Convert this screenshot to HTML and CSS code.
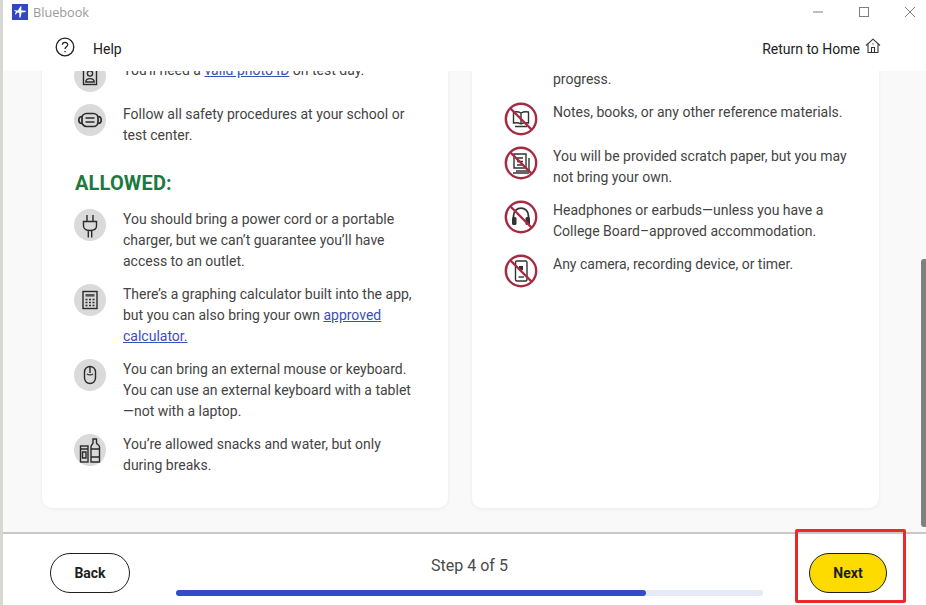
FILE: index.html
```html
<!DOCTYPE html>
<html lang="en">
  <head>
    <meta charset="UTF-8" />
    <meta name="viewport" content="width=device-width, initial-scale=1.0" />
    <title>Bluebook</title>
    <link rel="stylesheet" href="styles.css">
  </head>
  <body>
    <div class="window">
      <div class="title-bar">
        <svg class="app-logo" viewBox="0 0 16 16">
          <rect width="16" height="16" fill="#3147c4" />
          <path d="M9.5 2 L9.2 6.3 L13.5 6.8 L14 8 L9.6 8.6 L8.6 13.5 L7.4 13.5 L7.2 9 L5.4 8.6 L3.6 10.6 L2.8 10.2 L4 7.8 L2.2 6.6 L2.8 6 L5.6 6.8 L8.4 2.4 Z" fill="#fff" />
        </svg>
        <span class="app-name">Bluebook</span>
        <div class="window-controls">
          <svg viewBox="1 1 10 10"><path d="M1 6 H11" /></svg>
          <svg viewBox="1 1 10 10"><rect x="1.5" y="1.5" width="9" height="9" /></svg>
          <svg viewBox="1 1 10 10"><path d="M1 1 L11 11 M11 1 L1 11" /></svg>
        </div>
      </div>

      <div class="top-nav">
        <div class="help">
          <svg class="help-icon" viewBox="0 0 20 20">
            <circle cx="10" cy="10" r="8.8" />
            <path d="M7.4 7.8 C7.4 4.6 12.7 4.6 12.7 7.7 C12.7 9.8 10 9.6 10 12" />
            <path d="M10 14 V15.2" />
          </svg>
          <span>Help</span>
        </div>
        <div class="return-home">
          <span>Return to Home</span>
          <svg class="home-icon" viewBox="0 0 16 16">
            <path d="M1 7.5 L8 1.2 L15 7.5" />
            <path d="M3 6.2 V14.5 H13 V6.2" />
            <path d="M6.5 14.5 V9.5 H9.5 V14.5" />
            <path d="M8 5.2 V6.6" />
          </svg>
        </div>
      </div>

      <div class="content">
        <div class="cards">
          <div class="card">
            <h2 class="card-heading">REQUIRED:</h2>
            <div class="item">
              <span class="icon">
                <svg viewBox="0 0 20 20">
                  <rect x="3.5" y="1.5" width="13" height="17" />
                  <circle cx="10" cy="7.5" r="2.6" />
                  <path d="M5.8 16 C6 11.5 14 11.5 14.2 16 Z" />
                </svg>
              </span>
              <p>You'll need a <a href="#">valid photo ID</a> on test day.</p>
            </div>
            <div class="item">
              <span class="icon">
                <svg class="icon-mask" viewBox="0 0 26 20">
                  <rect x="5" y="3.5" width="16" height="13" rx="4.5" />
                  <path d="M5 6.5 C0.8 6.5 0.8 13.5 5 13.5 M21 6.5 C25.2 6.5 25.2 13.5 21 13.5 M8.5 8 H17.5 M8.5 12 H17.5" />
                </svg>
              </span>
              <p>Follow all safety procedures at your school or test center.</p>
            </div>
            <h2 class="card-heading card-heading-spaced">ALLOWED:</h2>
            <div class="item">
              <span class="icon">
                <svg class="icon-plug" viewBox="0 0 20 24">
                  <path d="M7 1 V7.5 M13 1 V7.5 M3.5 7.5 H16.5 V12 C16.5 15 13.5 16.5 10 16.5 C6.5 16.5 3.5 15 3.5 12 Z M8.3 16.5 V23.5 M11.7 16.5 V23.5" />
                </svg>
              </span>
              <p>You should bring a power cord or a portable charger, but we can’t guarantee you’ll have access to an outlet.</p>
            </div>
            <div class="item">
              <span class="icon">
                <svg viewBox="0 0 20 20">
                  <rect x="3" y="1.5" width="14" height="17" />
                  <rect x="5.5" y="4" width="9" height="2.6" class="solid" />
                  <path class="dots" d="M5.5 9.5 H7.5 M9 9.5 H11 M12.5 9.5 H14.5 M5.5 12.5 H7.5 M9 12.5 H11 M12.5 12.5 H14.5 M5.5 15.5 H7.5 M9 15.5 H11 M12.5 15.5 H14.5" />
                </svg>
              </span>
              <p>There’s a graphing calculator built into the app, but you can also bring your own <a href="#">approved calculator.</a></p>
            </div>
            <div class="item">
              <span class="icon">
                <svg viewBox="0 0 20 20">
                  <rect x="4.5" y="1.5" width="11" height="17" rx="5.5" />
                  <path d="M10 1.5 V8 M7 9 C8.5 10 11.5 10 13 9" />
                </svg>
              </span>
              <p>You can bring an external mouse or keyboard. You can use an external keyboard with a tablet —not with a laptop.</p>
            </div>
            <div class="item">
              <span class="icon">
                <svg class="icon-bottles" viewBox="0 0 22 25">
                  <rect x="1.5" y="8" width="7.5" height="16" />
                  <path d="M1.5 11 H9 M3.5 14 H7 V20 H3.5 Z" />
                  <path d="M12 24 V9 C12 7 13.5 6.5 14 5 V1 H17.5 V5 C18 6.5 20.5 7 20.5 9 V24 Z" />
                  <path d="M12 11 H20.5 M12 19 H20.5" />
                </svg>
              </span>
              <p>You’re allowed snacks and water, but only during breaks.</p>
            </div>
          </div>

          <div class="card card-not-allowed">
            <div class="item">
              <span class="icon-ban"></span>
              <p>Phones, smartwatches, or other electronic devices, including while a test is in<br>progress.</p>
            </div>
            <div class="item">
              <span class="icon-ban">
                <svg viewBox="0 0 34 34">
                  <path class="glyph" d="M17 11 C14.5 9.5 12 9.5 9.5 10 V21 C12 20.5 14.5 20.5 17 22 C19.5 20.5 22 20.5 24.5 21 V10 C22 9.5 19.5 9.5 17 11 Z M17 11 V22 M11 24.5 H23" />
                  <circle class="ring" cx="17" cy="17" r="15.2" />
                  <path class="ring" d="M6.5 6.5 L27.5 27.5" />
                </svg>
              </span>
              <p>Notes, books, or any other reference materials.</p>
            </div>
            <div class="item">
              <span class="icon-ban">
                <svg viewBox="0 0 34 34">
                  <path class="glyph" d="M10 8 H22 V22 H10 Z M13 12 H19 M13 15.5 H19 M13 19 H19 M25 12 V25 H12 M9 27 H25" />
                  <circle class="ring" cx="17" cy="17" r="15.2" />
                  <path class="ring" d="M6.5 6.5 L27.5 27.5" />
                </svg>
              </span>
              <p>You will be provided scratch paper, but you may not bring your own.</p>
            </div>
            <div class="item">
              <span class="icon-ban">
                <svg viewBox="0 0 34 34">
                  <path class="glyph glyph-thick" d="M9.5 20 V16 C9.5 5.5 24.5 5.5 24.5 16 V20" />
                  <rect class="glyph-solid" x="8" y="17" width="4.5" height="8" rx="1.5" />
                  <rect class="glyph-solid" x="21.5" y="17" width="4.5" height="8" rx="1.5" />
                  <circle class="ring" cx="17" cy="17" r="15.2" />
                  <path class="ring" d="M6.5 6.5 L27.5 27.5" />
                </svg>
              </span>
              <p>Headphones or earbuds—unless you have a College Board–approved accommodation.</p>
            </div>
            <div class="item">
              <span class="icon-ban">
                <svg viewBox="0 0 34 34">
                  <rect class="glyph" x="11.5" y="7" width="11.5" height="20" rx="1.5" />
                  <path class="glyph" d="M14.5 23 H20" />
                  <rect class="glyph-solid" x="15" y="12" width="4" height="4" />
                  <circle class="ring" cx="17" cy="17" r="15.2" />
                  <path class="ring" d="M6.5 6.5 L27.5 27.5" />
                </svg>
              </span>
              <p>Any camera, recording device, or timer.</p>
            </div>
          </div>
        </div>
        <div class="scroll-thumb"></div>
      </div>

      <div class="footer">
        <button class="btn">Back</button>
        <div class="progress-block">
          <div class="step-label">Step 4 of 5</div>
          <div class="progress-track">
            <div class="progress-fill" style="width: 80%"></div>
          </div>
        </div>
        <button class="btn btn-next">Next</button>
      </div>
      <div class="highlight-box"></div>
    </div>
  </body>
</html>
```

FILE: styles.css
```css
html,
body {
  margin: 0;
  height: 100%;
  overflow: hidden;
}
body {
  font-family: Roboto, "Liberation Sans", sans-serif;
  font-size: 14px;
  color: #444;
  background: #fff;
}
.window {
  position: relative;
  display: flex;
  flex-direction: column;
  box-sizing: border-box;
  height: 605px;
  border-left: 3px solid #d6d8d2;
}

/* title bar */
.title-bar {
  display: flex;
  align-items: center;
  height: 23px;
  padding-left: 9px;
  flex-shrink: 0;
}
.app-logo {
  width: 16px;
  height: 16px;
}
.app-name {
  margin-left: 5px;
  font-family: "Open Sans", sans-serif;
  font-size: 12.7px;
  color: #9a9a9a;
}
.window-controls {
  display: flex;
  gap: 36px;
  margin-left: auto;
  margin-right: 11px;
}
.window-controls svg {
  width: 10px;
  height: 10px;
  overflow: visible;
  fill: none;
  stroke: #7d7d7d;
  stroke-width: 1;
}

/* help / return row */
.top-nav {
  display: flex;
  align-items: center;
  justify-content: space-between;
  height: 48px;
  padding: 0 45px 0 52px;
  flex-shrink: 0;
  color: #222;
}
.help {
  display: flex;
  align-items: center;
  gap: 18px;
}
.help-icon {
  width: 20px;
  height: 20px;
  fill: none;
  stroke: #222;
  stroke-width: 1.3;
}
.help span,
.return-home span {
  padding-top: 3px;
}
.return-home {
  display: flex;
  align-items: center;
  gap: 5px;
}
.home-icon {
  width: 16px;
  height: 16px;
  margin-top: -3px;
  fill: none;
  stroke: #333;
  stroke-width: 1.1;
}

/* scrolled content */
.content {
  position: relative;
  flex: 1;
  min-height: 0;
  overflow: hidden;
  background: #f9f9f9;
}
.cards {
  display: grid;
  grid-template-columns: 406px 407px;
  gap: 24px;
  margin-top: -82px;
  padding-left: 39px;
}
.card {
  display: flex;
  flex-direction: column;
  gap: 12px;
  padding: 32px 30px 32px 32px;
  background: #fff;
  border-radius: 10px;
  box-shadow: 0 1px 4px rgba(0, 0, 0, 0.06);
}
.card-not-allowed {
  padding-top: 37.5px;
}
.card-heading {
  margin: 0 0 0 1px;
  font-size: 20px;
  line-height: 27px;
  font-weight: 700;
  letter-spacing: 0.15px;
  color: #1c7a3f;
}
.card-heading-spaced {
  margin-top: 12px;
}
.item {
  display: flex;
  gap: 17px;
  min-height: 32px;
}
.item p {
  flex: 1;
  margin: 0;
  line-height: 21px;
}
.item a {
  color: #3b4fb8;
}
.icon {
  display: flex;
  align-items: center;
  justify-content: center;
  flex-shrink: 0;
  width: 32px;
  height: 32px;
  border-radius: 50%;
  background: #dadada;
}
.icon svg {
  width: 20px;
  height: 20px;
  fill: none;
  stroke: #2b2b2b;
  stroke-width: 1.4;
}
.icon svg.icon-mask {
  width: 26px;
  stroke-width: 1.7;
}
.icon svg.icon-plug {
  height: 24px;
  margin-top: 2px;
}
.icon svg.icon-bottles {
  width: 22px;
  height: 25px;
}
.icon svg .solid {
  fill: #555;
  stroke: none;
}
.icon svg .dots {
  stroke-width: 1.6;
}
.icon-ban {
  flex-shrink: 0;
  width: 32px;
  height: 32px;
}
.icon-ban svg {
  display: block;
  width: 34px;
  height: 34px;
  fill: none;
}
.glyph {
  stroke: #333;
  stroke-width: 1.4;
  fill: none;
}
.glyph-thick {
  stroke-width: 1.8;
}
.glyph-solid {
  fill: #333;
}
.ring {
  stroke: #a52a43;
  stroke-width: 2.4;
}
.scroll-thumb {
  position: absolute;
  top: 188px;
  right: 0;
  width: 5px;
  height: 268px;
  border-radius: 3px 0 0 3px;
  background: #808080;
}

/* footer */
.footer {
  display: flex;
  align-items: flex-start;
  box-sizing: border-box;
  height: 73px;
  padding: 19px 39px 0 47px;
  flex-shrink: 0;
  background: #fff;
  border-top: 2px solid #c8c8c8;
}
.btn {
  width: 80px;
  height: 40px;
  padding: 0;
  font-family: Roboto, "Liberation Sans", sans-serif;
  font-size: 14px;
  font-weight: 700;
  color: #1e1e1e;
  background: #fff;
  border: 1px solid #1e1e1e;
  border-radius: 20px;
}
.btn-next {
  width: 78px;
  background: #fedb00;
}
.progress-block {
  flex: 1;
  margin: 0 46px;
}
.step-label {
  padding-top: 1px;
  font-size: 16px;
  line-height: 24px;
  text-align: center;
  color: #4a4a4a;
}
.progress-track {
  height: 6px;
  margin-top: 12px;
  border-radius: 3px;
  background: #e6eaf7;
}
.progress-fill {
  height: 100%;
  border-radius: 3px;
  background: #324dc7;
}
.highlight-box {
  position: absolute;
  right: 20px;
  bottom: 2px;
  box-sizing: border-box;
  width: 111px;
  height: 74px;
  border: 3px solid #ea2a2a;
  border-radius: 2px;
}
```
